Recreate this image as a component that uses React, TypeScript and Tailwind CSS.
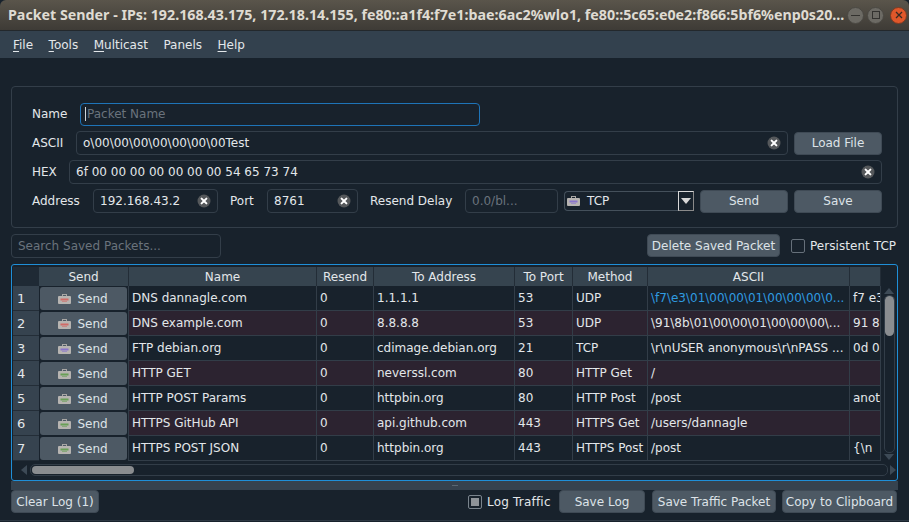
import React from "react";

const btn = "flex items-center justify-center rounded-[4px] bg-[#4d5964] border border-[#3f4a55] text-[#dde3e8] h-[23px] shrink-0";
const field = "flex items-center rounded-[4px] border border-[#333e49] h-[24px] px-[6px] min-w-0";

function ClearIcon() {
  return (
    <svg width="14" height="14" viewBox="0 0 14 14" className="shrink-0">
      <circle cx="7" cy="7" r="6.5" fill="#55585b" />
      <path d="M4.6 4.6 L9.4 9.4 M9.4 4.6 L4.6 9.4" stroke="#fff" strokeWidth="2" strokeLinecap="round" />
    </svg>
  );
}

function Pkg({ c }: { c: string }) {
  return (
    <svg width="13" height="10" viewBox="0 0 13 10" className="shrink-0">
      <rect x="4.5" y="0.5" width="4" height="2" fill="none" stroke="#a9a7a4" />
      <rect x="0" y="2" width="13" height="8" rx="1" fill="#b7b4b1" />
      <rect x="2.5" y="4.5" width="8" height="2" fill={c} opacity="0.75" />
      <rect x="4" y="7" width="5" height="1" fill={c} opacity="0.45" />
    </svg>
  );
}

const colW = ["w-[90px]", "w-[188px]", "w-[57px]", "w-[141px]", "w-[58px]", "w-[75px]", "w-[202px]", "w-[31px]"];
const headers = ["Send", "Name", "Resend", "To Address", "To Port", "Method", "ASCII", ""];

const rows = [
  { c: "#d9534f", name: "DNS dannagle.com", addr: "1.1.1.1", port: "53", method: "UDP", ascii: "\\f7\\e3\\01\\00\\00\\01\\00\\00\\00\\0...", hex: "f7 e3", plum: false, blue: true },
  { c: "#d9534f", name: "DNS example.com", addr: "8.8.8.8", port: "53", method: "UDP", ascii: "\\91\\8b\\01\\00\\00\\01\\00\\00\\00\\...", hex: "91 8", plum: true, blue: false },
  { c: "#7a5fd6", name: "FTP debian.org", addr: "cdimage.debian.org", port: "21", method: "TCP", ascii: "\\r\\nUSER anonymous\\r\\nPASS ...", hex: "0d 0", plum: false, blue: false },
  { c: "#4f9a3a", name: "HTTP GET", addr: "neverssl.com", port: "80", method: "HTTP Get", ascii: "/", hex: "", plum: true, blue: false },
  { c: "#4f9a3a", name: "HTTP POST Params", addr: "httpbin.org", port: "80", method: "HTTP Post", ascii: "/post", hex: "anot", plum: false, blue: false },
  { c: "#4f9a3a", name: "HTTPS GitHub API", addr: "api.github.com", port: "443", method: "HTTPS Get", ascii: "/users/dannagle", hex: "", plum: true, blue: false },
  { c: "#4f9a3a", name: "HTTPS POST JSON", addr: "httpbin.org", port: "443", method: "HTTPS Post", ascii: "/post", hex: "{\\n", plum: false, blue: false },
];

function Cell({ w, children, cls = "" }: { w: string; children?: React.ReactNode; cls?: string }) {
  return (
    <div className={`${w} shrink-0 h-full border-r border-b border-[#323d48] pl-[3px] flex items-center overflow-hidden whitespace-nowrap ${cls}`}>
      {children}
    </div>
  );
}

function U({ t, r }: { t: string; r: string }) {
  return (
    <span>
      <span className="underline underline-offset-2">{t}</span>
      {r}
    </span>
  );
}

export default function App() {
  return (
    <div className="w-[909px] h-[522px] overflow-hidden bg-[#18222c] font-['DejaVu_Sans',sans-serif] text-[12px] text-[#e3e7ea] flex flex-col">
      <div className="h-[31px] shrink-0 rounded-t-[6px] bg-gradient-to-b from-[#5a554b] to-[#3e3b36] border-b border-[#23282c] flex items-center pl-[8px] pr-[5px]">
        <div className="w-[838px] shrink-0 font-['Noto_Sans',sans-serif] font-bold text-[14.25px] text-[#dfdbd2] whitespace-nowrap overflow-hidden">
          Packet Sender - IPs: 192.168.43.175, 172.18.14.155, fe80::a1f4:f7e1:bae:6ac2%wlo1, fe80::5c65:e0e2:f866:5bf6%enp0s20...
        </div>
        <div className="flex items-center gap-[3px] ml-[1px]">
          <div className="w-[17px] h-[17px] rounded-full bg-[#6c6a64] border border-[#4a4843] flex items-center justify-center">
            <div className="w-[9px] h-[1px] bg-[#33322f]" />
          </div>
          <div className="w-[17px] h-[17px] rounded-full bg-[#6c6a64] border border-[#4a4843] flex items-center justify-center">
            <div className="w-[8px] h-[8px] border border-[#33322f]" />
          </div>
          <div className="w-[17px] h-[17px] rounded-full bg-[#e0572a] border border-[#7d3a22] flex items-center justify-center ml-[3px]">
            <svg width="8" height="8" viewBox="0 0 8 8"><path d="M1 1 L7 7 M7 1 L1 7" stroke="#3a2a22" strokeWidth="1.3" /></svg>
          </div>
        </div>
      </div>

      <div className="h-[27px] shrink-0 bg-[#33414e] flex items-center pl-[13px] gap-[15.5px] text-[#e3e7ea]">
        <U t="F" r="ile" />
        <U t="T" r="ools" />
        <U t="M" r="ulticast" />
        <span>Panels</span>
        <U t="H" r="elp" />
      </div>

      <div className="flex-1 flex flex-col pt-[28px] px-[11px] min-h-0">
        <div className="h-[142px] w-[887px] shrink-0 rounded-[4px] border border-[#333e49] pl-[20px] pr-[14px] pt-[15px] flex flex-col gap-[5px]">
          <div className="flex items-center h-[24px] gap-[12px]">
            <span className="w-[36px] shrink-0">Name</span>
            <div className="w-[400px] h-[23px] flex items-center rounded-[4px] border border-[#1e74b8] px-[4px] text-[#6a737c]">
              <div className="w-[1px] h-[14px] bg-[#cfd5da] mr-[1px]" />
              Packet Name
            </div>
          </div>
          <div className="flex items-center h-[24px] gap-[6px]">
            <span className="w-[38px] shrink-0">ASCII</span>
            <div className={`${field} w-[712px] justify-between`}>
              <span>o\00\00\00\00\00\00\00Test</span>
              <ClearIcon />
            </div>
            <div className={`${btn} w-[88px]`}>Load File</div>
          </div>
          <div className="flex items-center h-[24px] gap-[11px]">
            <span className="w-[26px] shrink-0">HEX</span>
            <div className={`${field} w-[813px] justify-between`}>
              <span>6f 00 00 00 00 00 00 00 54 65 73 74</span>
              <ClearIcon />
            </div>
          </div>
          <div className="flex items-center h-[24px]">
            <span className="w-[61px] shrink-0">Address</span>
            <div className={`${field} w-[125px] justify-between`}>
              <span>192.168.43.2</span>
              <ClearIcon />
            </div>
            <span className="w-[37px] ml-[12px] shrink-0">Port</span>
            <div className={`${field} w-[91px] justify-between`}>
              <span>8761</span>
              <ClearIcon />
            </div>
            <span className="w-[95px] ml-[12px] shrink-0">Resend Delay</span>
            <div className={`${field} w-[93px] text-[#6a737c]`}>0.0/bl...</div>
            <div className="w-[130px] h-[20px] ml-[6px] shrink-0 rounded-l-[4px] border-t border-l border-b border-[#44505b] flex items-center pl-[2px] relative">
              <Pkg c="#7a5fd6" />
              <span className="ml-[7px]">TCP</span>
              <div className="absolute right-0 -top-[1px] w-[16px] h-[20px] border border-[#d8d8d8] border-r-[#8a8a8a] border-b-[#8a8a8a] flex items-center justify-center">
                <svg width="10" height="6" viewBox="0 0 10 6"><path d="M0 0 H10 L5 6 Z" fill="#d8d8d8" /></svg>
              </div>
            </div>
            <div className={`${btn} w-[88px] ml-[6px]`}>Send</div>
            <div className={`${btn} w-[88px] ml-[6px]`}>Save</div>
          </div>
        </div>

        <div className="flex items-center h-[23px] mt-[6px] shrink-0">
          <div className={`${field} w-[210px] h-[23px] text-[#6a737c]`}>Search Saved Packets...</div>
          <div className={`${btn} w-[133px] ml-[426px]`}>Delete Saved Packet</div>
          <div className="w-[14px] h-[14px] ml-[11px] rounded-[2px] border border-[#66707a] shrink-0" />
          <span className="ml-[5px] whitespace-nowrap tracking-[0.05px]">Persistent TCP</span>
        </div>

        <div className="mt-[7px] h-[217px] w-[887px] shrink-0 rounded-[3px] border border-[#1f8fd8] pl-[1px] pt-[2px] pr-[1px] flex flex-col overflow-hidden">
          <div className="flex min-h-0 h-[194px]">
            <div className="w-[26px] shrink-0 flex flex-col">
              <div className="h-[19px] bg-[#1f2a35] shrink-0" />
              {rows.map((_, i) => (
                <div key={i} className="h-[25px] shrink-0 bg-[#36434f] border-b border-[#232d37] pl-[4px] pt-[1px] flex items-center text-[13px]">
                  {i + 1}
                </div>
              ))}
            </div>
            <div className="w-[842px] shrink-0 flex flex-col overflow-hidden">
              <div className="flex h-[19px] shrink-0 bg-[#36444f]">
                {headers.map((h, i) => (
                  <div key={i} className={`${colW[i]} shrink-0 h-full border-r border-[#232d37] flex items-center justify-center`}>
                    {h}
                  </div>
                ))}
              </div>
              {rows.map((r, i) => (
                <div key={i} className={`flex h-[25px] shrink-0 ${r.plum ? "bg-[#2c2330]" : ""}`}>
                  <div className={`${colW[0]} shrink-0 h-full bg-[#18222c] border-r border-[#323d48] p-[1px]`}>
                    <div className="w-[87px] h-[23px] rounded-[3px] bg-[#4d5964] flex items-center justify-center gap-[6px] pr-[1px] text-[#dde3e8]">
                      <Pkg c={r.c} />
                      <span>Send</span>
                    </div>
                  </div>
                  <Cell w={colW[1]}>{r.name}</Cell>
                  <Cell w={colW[2]}>0</Cell>
                  <Cell w={colW[3]}>{r.addr}</Cell>
                  <Cell w={colW[4]}>{r.port}</Cell>
                  <Cell w={colW[5]}>{r.method}</Cell>
                  <Cell w={colW[6]} cls={r.blue ? "text-[#2f9be0]" : ""}>{r.ascii}</Cell>
                  <Cell w={colW[7]}>{r.hex}</Cell>
                </div>
              ))}
            </div>
            <div className="w-[16px] shrink-0 flex flex-col items-center pt-[19px]">
              <svg width="10" height="6" viewBox="0 0 10 6" className="mt-[2px]"><path d="M5 0 L10 6 H0 Z" fill="#3d4a56" /></svg>
              <div className="w-[11px] flex-1 mt-[1px] rounded-[5px] border border-[#323d48]">
                <div className="w-[9px] h-[40px] rounded-[5px] bg-[#8a8d90]" />
              </div>
              <svg width="10" height="6" viewBox="0 0 10 6" className="mt-[1px] mb-[1px]"><path d="M0 0 H10 L5 6 Z" fill="#3d4a56" /></svg>
            </div>
          </div>
          <div className="flex items-center h-[18px] shrink-0">
            <svg width="6" height="10" viewBox="0 0 6 10" className="ml-[8px]"><path d="M6 0 V10 L0 5 Z" fill="#3d4a56" /></svg>
            <div className="w-[860px] h-[12px] ml-[3px] rounded-[5px] border border-[#323d48] p-[1px]">
              <div className="w-[102px] h-full rounded-[4px] bg-[#8a8d90]" />
            </div>
            <svg width="6" height="10" viewBox="0 0 6 10" className="ml-[2px]"><path d="M0 0 V10 L6 5 Z" fill="#3d4a56" /></svg>
          </div>
        </div>

        <div className="h-[9px] shrink-0 bg-[#36424e] flex items-center justify-center">
          <div className="w-[6px] h-[1px] bg-[#5a6772]" />
        </div>

        <div className="flex items-center h-[23px] shrink-0">
          <div className={`${btn} w-[88px]`}>Clear Log (1)</div>
          <div className="w-[14px] h-[14px] ml-[369px] rounded-[2px] border border-[#7a848d] p-[2px] shrink-0">
            <div className="w-full h-full bg-[#8f9499]" />
          </div>
          <span className="ml-[5px] w-[72px] shrink-0 whitespace-nowrap tracking-[0.2px]">Log Traffic</span>
          <div className={`${btn} w-[86px]`}>Save Log</div>
          <div className={`${btn} w-[124px] ml-[7px]`}>Save Traffic Packet</div>
          <div className={`${btn} w-[115px] ml-[6px]`}>Copy to Clipboard</div>
        </div>

        <div className="h-[1px] mt-[7px] -mx-[11px] shrink-0 bg-[#2c3742]" />
      </div>
    </div>
  );
}
